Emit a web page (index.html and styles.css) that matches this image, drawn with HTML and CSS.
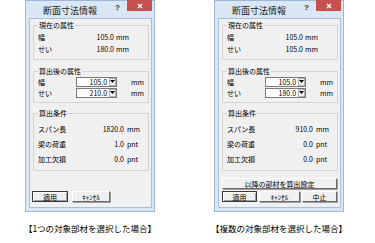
FILE: index.html
```html
<!DOCTYPE html>
<html lang="ja">
<head>
    <meta charset="UTF-8">
    <meta name="viewport" content="width=device-width, initial-scale=1.0">
    <title>断面寸法情報</title>
    <link rel="stylesheet" href="styles.css">
</head>
<body>
    <div class="page">
        <!-- one member selected -->
        <div class="figure">
            <div class="dialog">
                <div class="titlebar">
                    <span class="title">断面寸法情報</span>
                    <span class="help">?</span>
                    <span class="close">
                        <svg width="6" height="6" viewBox="0 0 6 6"><path d="M1 1L5 5M5 1L1 5" stroke="#fff" stroke-width="1.4"/></svg>
                    </span>
                </div>
                <div class="client">
                    <fieldset class="group group-current">
                        <legend>現在の属性</legend>
                        <div class="row">
                            <span class="label">幅</span>
                            <span class="value">105.0</span>
                            <span class="unit">mm</span>
                        </div>
                        <div class="row">
                            <span class="label">せい</span>
                            <span class="value">180.0</span>
                            <span class="unit">mm</span>
                        </div>
                    </fieldset>
                    <fieldset class="group group-after">
                        <legend>算出後の属性</legend>
                        <div class="row">
                            <span class="label">幅</span>
                            <span class="combo"><span class="combo-text">105.0</span><span class="combo-arrow"><svg width="5" height="3" viewBox="0 0 5 3"><path d="M0 0H5L2.5 3Z" fill="#000"/></svg></span></span>
                            <span class="unit">mm</span>
                        </div>
                        <div class="row">
                            <span class="label">せい</span>
                            <span class="combo"><span class="combo-text">210.0</span><span class="combo-arrow"><svg width="5" height="3" viewBox="0 0 5 3"><path d="M0 0H5L2.5 3Z" fill="#000"/></svg></span></span>
                            <span class="unit">mm</span>
                        </div>
                    </fieldset>
                    <fieldset class="group group-calc">
                        <legend>算出条件</legend>
                        <div class="row">
                            <span class="label">スパン長</span>
                            <span class="value">1820.0</span>
                            <span class="unit">mm</span>
                        </div>
                        <div class="row">
                            <span class="label">梁の荷重</span>
                            <span class="value">1.0</span>
                            <span class="unit">pnt</span>
                        </div>
                        <div class="row">
                            <span class="label">加工欠損</span>
                            <span class="value">0.0</span>
                            <span class="unit">pnt</span>
                        </div>
                    </fieldset>
                    <div class="buttons">
                        <button class="btn btn-default btn-apply">適用</button>
                        <button class="btn btn-cancel">ｷｬﾝｾﾙ</button>
                    </div>
                </div>
            </div>
            <p class="caption">【1つの対象部材を選択した場合】</p>
        </div>

        <!-- several members selected -->
        <div class="figure">
            <div class="dialog">
                <div class="titlebar">
                    <span class="title">断面寸法情報</span>
                    <span class="help">?</span>
                    <span class="close">
                        <svg width="6" height="6" viewBox="0 0 6 6"><path d="M1 1L5 5M5 1L1 5" stroke="#fff" stroke-width="1.4"/></svg>
                    </span>
                </div>
                <div class="client">
                    <fieldset class="group group-current">
                        <legend>現在の属性</legend>
                        <div class="row">
                            <span class="label">幅</span>
                            <span class="value">105.0</span>
                            <span class="unit">mm</span>
                        </div>
                        <div class="row">
                            <span class="label">せい</span>
                            <span class="value">105.0</span>
                            <span class="unit">mm</span>
                        </div>
                    </fieldset>
                    <fieldset class="group group-after">
                        <legend>算出後の属性</legend>
                        <div class="row">
                            <span class="label">幅</span>
                            <span class="combo"><span class="combo-text">105.0</span><span class="combo-arrow"><svg width="5" height="3" viewBox="0 0 5 3"><path d="M0 0H5L2.5 3Z" fill="#000"/></svg></span></span>
                            <span class="unit">mm</span>
                        </div>
                        <div class="row">
                            <span class="label">せい</span>
                            <span class="combo"><span class="combo-text">180.0</span><span class="combo-arrow"><svg width="5" height="3" viewBox="0 0 5 3"><path d="M0 0H5L2.5 3Z" fill="#000"/></svg></span></span>
                            <span class="unit">mm</span>
                        </div>
                    </fieldset>
                    <fieldset class="group group-calc">
                        <legend>算出条件</legend>
                        <div class="row">
                            <span class="label">スパン長</span>
                            <span class="value">910.0</span>
                            <span class="unit">mm</span>
                        </div>
                        <div class="row">
                            <span class="label">梁の荷重</span>
                            <span class="value">0.0</span>
                            <span class="unit">pnt</span>
                        </div>
                        <div class="row">
                            <span class="label">加工欠損</span>
                            <span class="value">0.0</span>
                            <span class="unit">pnt</span>
                        </div>
                    </fieldset>
                    <button class="btn btn-wide">以降の部材を算出設定</button>
                    <div class="buttons buttons-three">
                        <button class="btn btn-default btn-apply">適用</button>
                        <button class="btn btn-cancel">ｷｬﾝｾﾙ</button>
                        <button class="btn btn-stop">中止</button>
                    </div>
                </div>
            </div>
            <p class="caption">【複数の対象部材を選択した場合】</p>
        </div>
    </div>
</body>
</html>
```

FILE: styles.css
```css
body {
    margin: 0;
    background: #ffffff;
    font-family: "Noto Sans CJK JP", "Noto Sans", sans-serif;
    color: #000000;
}
.page {
    display: flex;
    gap: 59px;
    padding-left: 25px;
}
.figure {
    width: 130px;
    display: flex;
    flex-direction: column;
    align-items: center;
}
.dialog {
    width: 130px;
    height: 212px;
    box-sizing: border-box;
    display: flex;
    flex-direction: column;
    background: #d9e6f4;
    border: 1px solid #9db8d8;
    padding: 0 2px 3px 3px;
}
.titlebar {
    height: 17px;
    display: flex;
    align-items: flex-start;
}
.title {
    font-size: 9px;
    line-height: 9px;
    margin-top: 5px;
    padding-left: 14px;
    color: #222222;
    flex: 1;
}
.help {
    font-family: "Liberation Sans", sans-serif;
    font-weight: bold;
    font-size: 8px;
    line-height: 8px;
    margin-top: 3px;
    margin-right: 7px;
    color: #333333;
}
.close {
    width: 25px;
    height: 11px;
    margin-top: -1px;
    background: #c75050;
    display: flex;
    align-items: center;
    justify-content: center;
}
.close svg {
    display: block;
}
.client {
    flex: 1;
    display: flex;
    flex-direction: column;
    background: #f0f0f0;
    border: 1px solid #aac0d8;
    padding: 0 0 5px 0;
}
.group {
    margin: 0 2px 0 3px;
    padding: 0 4px 4px 4px;
    border: 1px solid #d3d3d3;
    min-inline-size: 0;
}
.group legend {
    font-size: 7px;
    line-height: 8px;
    padding: 0 1px;
    margin-left: 0;
}
.group-current {
    margin-top: 2px;
    padding-top: 2px;
}
.group-after {
    margin-top: 7px;
    padding-top: 1px;
}
.group-calc {
    margin-top: 6px;
    padding-top: 4px;
}
.row {
    display: flex;
    align-items: center;
    height: 12px;
    font-size: 7px;
    line-height: 8px;
}
.group-after .row {
    height: 11px;
}
.group-calc .row {
    height: 15px;
}
.label {
    width: 50px;
}
.value {
    width: 26px;
    text-align: right;
}
.unit {
    margin-left: 2px;
}
.group-calc .value {
    width: 36px;
}
.group-calc .unit {
    margin-left: 3px;
}
.group-after .label {
    width: 42px;
}
.group-after .unit {
    margin-left: 14px;
}
.combo {
    width: 45px;
    height: 10px;
    box-sizing: border-box;
    display: flex;
    align-items: stretch;
    background: #ffffff;
    border: 1px solid #7a7a7a;
}
.combo-text {
    flex: 1;
    text-align: right;
    padding-right: 2px;
    line-height: 8px;
}
.combo-arrow {
    width: 7px;
    box-sizing: border-box;
    border: 1px solid #b0b0b0;
    background: #f4f4f4;
    display: flex;
    align-items: center;
    justify-content: center;
}
.combo-arrow svg {
    display: block;
}
.btn {
    height: 11px;
    box-sizing: border-box;
    padding: 0;
    font-family: inherit;
    font-size: 7px;
    line-height: 8px;
    color: #000000;
    background: #f0f0f0;
    border: 1px solid;
    border-color: #ffffff #6a6a6a #6a6a6a #ffffff;
    box-shadow: 1px 1px 0 #a0a0a0;
}
.btn-default {
    border-color: #3a3a3a;
    box-shadow: inset 1px 1px 0 #ffffff, inset -1px -1px 0 #a0a0a0;
}
.btn-wide {
    margin: auto 3px 0 3px;
}
.buttons {
    display: flex;
    gap: 4px;
    margin-top: auto;
    padding-left: 2px;
}
.btn-apply {
    width: 36px;
}
.btn-cancel {
    width: 38px;
}
.buttons-three {
    margin-top: 2px;
    gap: 2px;
    padding-left: 3px;
}
.buttons-three .btn-apply {
    width: 35px;
}
.buttons-three .btn-cancel {
    width: 41px;
}
.btn-stop {
    width: 35px;
}
.caption {
    margin: 10px 0 0 0;
    font-size: 8.5px;
    line-height: 12px;
    white-space: nowrap;
}
```
